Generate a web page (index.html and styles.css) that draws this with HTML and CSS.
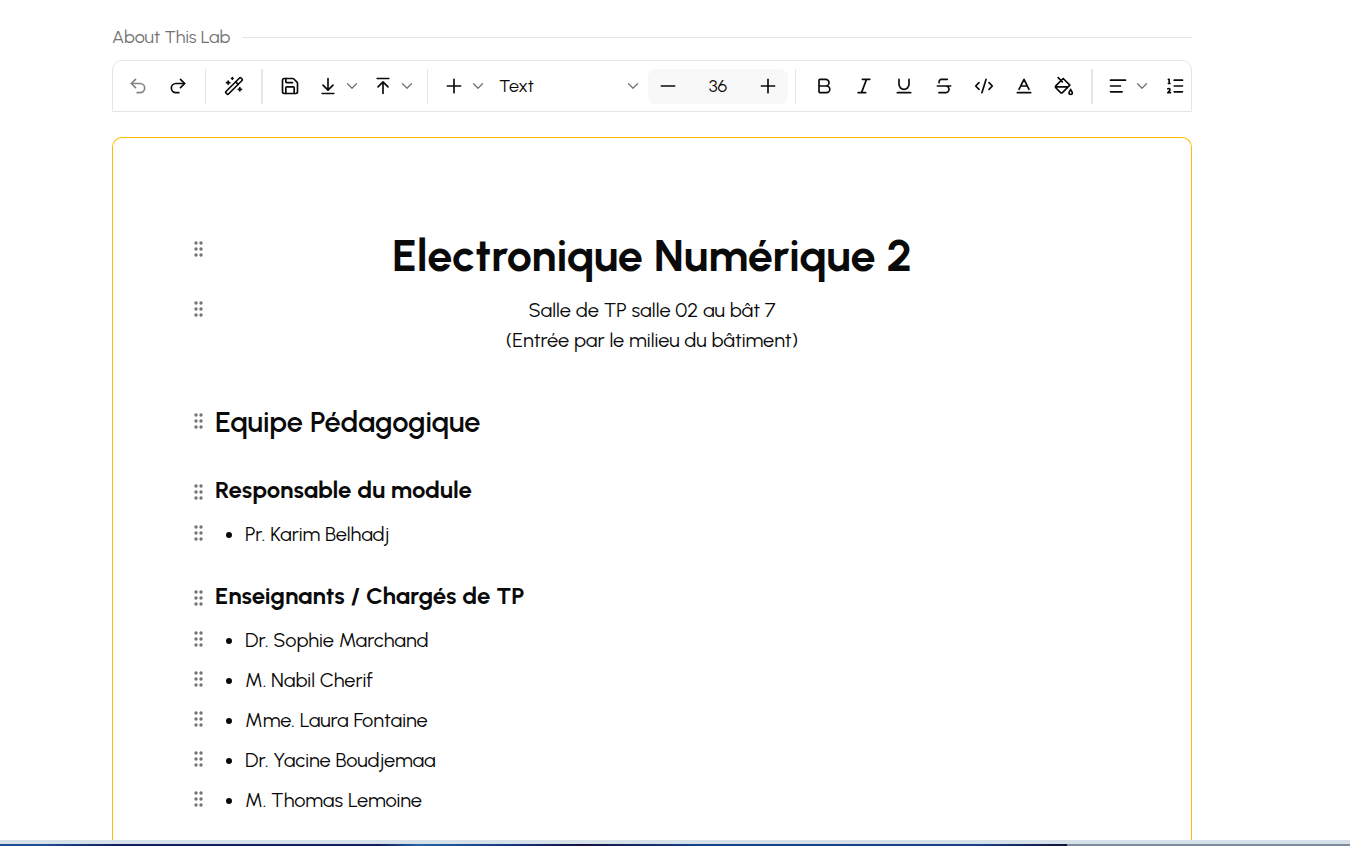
FILE: index.html
```html
<!DOCTYPE html>
<html lang="en">
<head>
<meta charset="utf-8">
<title>About This Lab</title>
<link rel="stylesheet" href="styles.css">
</head>
<body>
<svg class="sprite" aria-hidden="true">
  <symbol id="chevron" viewBox="0 0 24 24"><path d="m6 9 6 6 6-6"/></symbol>
  <symbol id="grip" viewBox="0 0 12 18"><circle cx="4" cy="3" r="1.700"/><circle cx="9" cy="3" r="1.700"/><circle cx="4" cy="9" r="1.700"/><circle cx="9" cy="9" r="1.700"/><circle cx="4" cy="15" r="1.700"/><circle cx="9" cy="15" r="1.700"/></symbol>
  <symbol id="plus" viewBox="0 0 24 24"><path d="M4 12h16M12 4v16"/></symbol>
</svg>
<main class="page">
  <div class="section-title"><span>About This Lab</span></div>
  <div class="toolbar" role="toolbar" aria-label="Formatting">
    <button class="tool" disabled aria-label="Undo"><svg class="icon" viewBox="0 0 24 24"><path d="M9 14 4 9l5-5"/><path d="M4 9h10.500a5.500 5.500 0 0 1 0 11H11"/></svg></button>
    <button class="tool" aria-label="Redo"><svg class="icon" viewBox="0 0 24 24"><path d="m15 14 5-5-5-5"/><path d="M20 9H9.500a5.500 5.500 0 0 0 0 11H13"/></svg></button>
    <span class="divider"></span>
    <button class="tool" aria-label="AI assistant"><svg class="icon" viewBox="0 0 24 24"><path d="m21.640 3.640-1.280-1.280a1.210 1.210 0 0 0-1.720 0L2.360 18.640a1.210 1.210 0 0 0 0 1.720l1.280 1.280a1.200 1.200 0 0 0 1.720 0L21.640 5.360a1.200 1.200 0 0 0 0-1.720"/><path d="m14 7 3 3M5 6v4M19 14v4M10 2v2M7 8H3M21 16h-4M11 3H9"/></svg></button>
    <span class="divider divider-strong"></span>
    <button class="tool" aria-label="Save"><svg class="icon" viewBox="0 0 24 24"><path d="M15.200 3a2 2 0 0 1 1.400.600l3.800 3.800a2 2 0 0 1 .600 1.400V19a2 2 0 0 1-2 2H5a2 2 0 0 1-2-2V5a2 2 0 0 1 2-2z"/><path d="M17 21v-7a1 1 0 0 0-1-1H8a1 1 0 0 0-1 1v7M7 3v4a1 1 0 0 0 1 1h7"/></svg></button>
    <div class="split">
      <button aria-label="Download"><svg class="icon" viewBox="0 0 24 24"><path d="M12 17V3M6 11l6 6 6-6M19 21H5"/></svg></button>
      <button class="more" aria-label="Download options"><svg class="chevron"><use href="#chevron"/></svg></button>
    </div>
    <div class="split">
      <button aria-label="Upload"><svg class="icon" viewBox="0 0 24 24"><path d="M5 3h14M18 13l-6-6-6 6M12 7v14"/></svg></button>
      <button class="more" aria-label="Upload options"><svg class="chevron"><use href="#chevron"/></svg></button>
    </div>
    <span class="divider"></span>
    <div class="split">
      <button aria-label="Insert"><svg class="icon"><use href="#plus"/></svg></button>
      <button class="more" aria-label="Insert options"><svg class="chevron"><use href="#chevron"/></svg></button>
    </div>
    <div class="block-type">
      <select aria-label="Block type"><option>Text</option><option>Heading</option></select>
      <svg class="chevron"><use href="#chevron"/></svg>
    </div>
    <div class="stepper">
      <button class="tool" aria-label="Decrease font size"><svg class="icon" viewBox="0 0 24 24"><path d="M4 12h16"/></svg></button>
      <input type="text" value="36" aria-label="Font size">
      <button class="tool" aria-label="Increase font size"><svg class="icon"><use href="#plus"/></svg></button>
    </div>
    <span class="divider"></span>
    <button class="tool" aria-label="Bold"><svg class="icon" viewBox="0 0 24 24"><path d="M6 12h9a4 4 0 0 1 0 8H7a1 1 0 0 1-1-1V5a1 1 0 0 1 1-1h7a4 4 0 0 1 0 8"/></svg></button>
    <button class="tool" aria-label="Italic"><svg class="icon" viewBox="0 0 24 24"><path d="M19 4h-9M14 20H5M15 4 9 20"/></svg></button>
    <button class="tool" aria-label="Underline"><svg class="icon" viewBox="0 0 24 24"><path d="M6 4v6a6 6 0 0 0 12 0V4M4 20h16"/></svg></button>
    <button class="tool" aria-label="Strikethrough"><svg class="icon" viewBox="0 0 24 24"><path d="M16 4H9a3 3 0 0 0-2.830 4M14 12a4 4 0 0 1 0 8H6M4 12h16"/></svg></button>
    <button class="tool" aria-label="Code"><svg class="icon" viewBox="0 0 24 24"><path d="m18 16 4-4-4-4M6 8l-4 4 4 4M14.500 4l-5 16"/></svg></button>
    <button class="tool" aria-label="Text color"><svg class="icon" viewBox="0 0 24 24"><path d="M4 20h16M6 16l6-12 6 12M8 12h8"/></svg></button>
    <button class="tool" aria-label="Background color"><svg class="icon" viewBox="0 0 24 24"><path d="m19 11-8-8-8.600 8.600a2 2 0 0 0 0 2.800l5.200 5.200c.800.800 2 .800 2.800 0L19 11ZM5 2l5 5M2 13h15M22 20a2 2 0 1 1-4 0c0-1.600 1.700-2.400 2-4 .300 1.600 2 2.400 2 4Z"/></svg></button>
    <span class="divider divider-strong"></span>
    <div class="split">
      <button aria-label="Align"><svg class="icon" viewBox="0 0 24 24"><path d="M21 5H3M15 12H3M17 19H3"/></svg></button>
      <button class="more" aria-label="Align options"><svg class="chevron"><use href="#chevron"/></svg></button>
    </div>
    <button class="tool" aria-label="Numbered list"><svg class="icon" viewBox="0 0 24 24"><path d="M11 5h10M11 12h10M11 19h10M4 4h1v5M4 9h2M6.500 20H3.400c0-1 2.600-1.925 2.600-3.500a1.500 1.500 0 0 0-2.600-1.020"/></svg></button>
  </div>

  <article class="editor">
    <div class="block block-h1"><svg class="grip"><use href="#grip"/></svg><h1>Electronique Numérique 2</h1></div>
    <div class="block block-intro"><svg class="grip"><use href="#grip"/></svg><p>Salle de TP salle 02 au bât 7<br>(Entrée par le milieu du bâtiment)</p></div>
    <div class="block block-h2"><svg class="grip"><use href="#grip"/></svg><h2>Equipe Pédagogique</h2></div>
    <div class="block block-h3"><svg class="grip"><use href="#grip"/></svg><h3>Responsable du module</h3></div>
    <div class="block block-item"><svg class="grip"><use href="#grip"/></svg><ul><li>Pr. Karim Belhadj</li></ul></div>
    <div class="block block-h3"><svg class="grip"><use href="#grip"/></svg><h3>Enseignants / Chargés de TP</h3></div>
    <div class="block block-item"><svg class="grip"><use href="#grip"/></svg><ul><li>Dr. Sophie Marchand</li></ul></div>
    <div class="block block-item"><svg class="grip"><use href="#grip"/></svg><ul><li>M. Nabil Cherif</li></ul></div>
    <div class="block block-item"><svg class="grip"><use href="#grip"/></svg><ul><li>Mme. Laura Fontaine</li></ul></div>
    <div class="block block-item"><svg class="grip"><use href="#grip"/></svg><ul><li>Dr. Yacine Boudjemaa</li></ul></div>
    <div class="block block-item"><svg class="grip"><use href="#grip"/></svg><ul><li>M. Thomas Lemoine</li></ul></div>
  </article>
</main>
<div class="desktop-edge"></div>
</body>
</html>
```
FILE: styles.css
```css
* { box-sizing: border-box; }

body {
  margin: 0;
  height: 100vh;
  display: flex;
  flex-direction: column;
  overflow: hidden;
  background: #fff;
  color: #0a0a0a;
  font-family: Urbanist, Lato, sans-serif;
  font-size: 20px;
  line-height: 30px;
}

button, input, select {
  margin: 0;
  padding: 0;
  border: 0;
  background: none;
  color: inherit;
  font: inherit;
}

.sprite { position: absolute; width: 0; height: 0; }

.page {
  flex: 1;
  min-height: 0;
  display: flex;
  flex-direction: column;
  padding: 25px 158px 0 112px;
}

.section-title {
  display: flex;
  align-items: center;
  gap: 12px;
  margin-bottom: 10px;
  color: #737373;
  font-size: 18px;
  line-height: 25px;
}

.section-title::after {
  content: "";
  flex: 1;
  height: 1px;
  background: #e5e5e5;
}

.toolbar {
  flex: none;
  display: flex;
  align-items: center;
  height: 52px;
  padding-left: 5px;
  overflow: hidden;
  border: 1px solid #e5e5e5;
  border-radius: 10px 10px 0 0;
}

.toolbar > * { flex: none; }

.tool {
  width: 40px;
  height: 36px;
  display: grid;
  place-items: center;
}

.tool:disabled { opacity: 0.5; }

.icon, .chevron {
  display: block;
  fill: none;
  stroke: currentColor;
  stroke-width: 2;
  stroke-linecap: round;
  stroke-linejoin: round;
}

.icon { width: 20px; height: 20px; }

.chevron { width: 18px; height: 18px; color: #737373; stroke-width: 1.7; }

.divider {
  width: 16px;
  height: 35px;
  display: flex;
  padding-left: 7px;
}

.divider::before { content: ""; width: 1px; background: #e5e5e5; }

.divider-strong::before { width: 2px; }

.split { display: flex; padding: 0 3px 0 4px; }

.split button {
  width: 28px;
  height: 36px;
  display: grid;
  place-items: center;
}

.split .more { width: 20px; }

.block-type {
  display: grid;
  grid-template-columns: 1fr 18px;
  align-items: center;
  width: 157px;
  padding-right: 6px;
}

.block-type select {
  grid-area: 1 / 1 / 2 / 3;
  height: 36px;
  padding-left: 8px;
  appearance: none;
  font-size: 18px;
}

.block-type .chevron { grid-area: 1 / 2; pointer-events: none; }

.stepper {
  display: flex;
  height: 35px;
  align-items: center;
  background: #f8f8f8;
  border-radius: 8px;
}

.stepper input { width: 60px; text-align: center; font-size: 18px; }

.editor {
  flex: 1;
  min-height: 0;
  margin-top: 25px;
  padding: 91px 68px 0;
  overflow: hidden;
  border: 1px solid #ffb900;
  border-bottom: 0;
  border-radius: 10px 10px 0 0;
}

.block {
  display: grid;
  grid-template-columns: 34px 1fr 34px;
  justify-items: center;
}

.block > :last-child { justify-self: stretch; margin: 0; }

.grip { width: 12px; height: 28px; fill: #737373; }

.block-h1 .grip { height: 40px; }
.block-h2 .grip { height: 42px; }
.block-h3 .grip { height: 38px; }

.block-intro { margin-top: 14px; text-align: center; }
.block-h2 { margin-top: 45px; }
.block-h3 { height: 36px; margin-top: 30px; }
.block-item { margin-top: 10px; }

h1 { font-size: 45px; line-height: 52px; font-weight: 700; text-align: center; }
h2 { font-size: 29px; line-height: 43px; font-weight: 600; }
h3 { font-size: 24px; line-height: 34px; font-weight: 700; }

p, li { font-weight: 400; }
ul { padding-left: 30px; }

.desktop-edge {
  flex: none;
  height: 6px;
  border-top: 4px solid #d5e0e8;
  background: linear-gradient(90deg, #1f4c95 0 3%, #101c5c 9% 28%, #2464a5 31%, #16337c 38%, #141040 43%, #17448c 52%, #1b428a 72%, #111439 79%, #7d8c9c 79% 100%);
}
```
